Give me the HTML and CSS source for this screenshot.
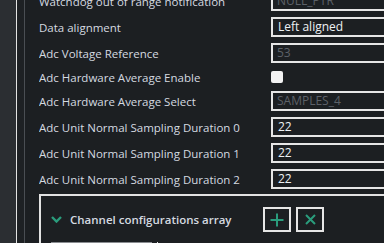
FILE: index.html
```html
<!doctype html>
<html>
    <head>
        <meta charset="utf-8">
        <title>Adc configuration</title>
        <link rel="stylesheet" href="styles.css">
    </head>

    <body>
        <div class="frame">
            <div class="sidebar"></div>
            <div class="gutter"></div>
            <div class="main">
                <div class="form">
                    <div class="row">
                        <div class="label">Watchdog out of range notification</div>
                        <div class="field disabled">NULL_PTR</div>
                    </div>
                    <div class="row">
                        <div class="label">Data alignment</div>
                        <div class="field">Left aligned</div>
                    </div>
                    <div class="row">
                        <div class="label">Adc Voltage Reference</div>
                        <div class="field disabled">53</div>
                    </div>
                    <div class="row short">
                        <div class="label">Adc Hardware Average Enable</div>
                        <div class="check"></div>
                    </div>
                    <div class="row">
                        <div class="label">Adc Hardware Average Select</div>
                        <div class="field disabled">SAMPLES_4</div>
                    </div>
                    <div class="row">
                        <div class="label">Adc Unit Normal Sampling Duration 0</div>
                        <div class="field">22</div>
                    </div>
                    <div class="row">
                        <div class="label">Adc Unit Normal Sampling Duration 1</div>
                        <div class="field">22</div>
                    </div>
                    <div class="row">
                        <div class="label">Adc Unit Normal Sampling Duration 2</div>
                        <div class="field">22</div>
                    </div>
                </div>

                <div class="group">
                    <div class="grouphead">
                        <svg class="chevron" width="11" height="7" viewBox="0 0 11 7">
                            <path d="M1 1 L5.5 5.5 L10 1" fill="none" stroke="#2a9c7c" stroke-width="2.4"/>
                        </svg>
                        <span class="grouptitle">Channel configurations array</span>
                        <div class="btn">
                            <svg width="14" height="14" viewBox="0 0 14 14">
                                <path d="M7 0.5 V13.5 M0.5 7 H13.5" stroke="#2a9c7c" stroke-width="2"/>
                            </svg>
                        </div>
                        <div class="btn">
                            <svg width="11" height="11" viewBox="0 0 11 11">
                                <path d="M1 1 L10 10 M10 1 L1 10" stroke="#2a9c7c" stroke-width="2"/>
                            </svg>
                        </div>
                    </div>
                    <div class="groupbody">
                        <div class="tab"></div>
                        <div class="tabedge"></div>
                    </div>
                </div>
            </div>
        </div>
    </body>

</html>
```

FILE: styles.css
```css
body{
    margin: 0px;
    background-color: #1c1f22;
    overflow: hidden;
    font-family: 'Open Sans', 'Noto Sans', sans-serif;
    font-size: 11.5px;
    color: #d5dae0;
}

.frame{
    display: flex;
    height: 243px;
    overflow: hidden;
}

.sidebar{
    width: 16px;
    flex: none;
    background-color: #2b2e32;
    border-right: 1px solid #e4e4e4;
}

.gutter{
    width: 7px;
    flex: none;
    background-color: #1e2124;
    border-right: 1px solid #4a4e53;
}

.main{
    flex: none;
    width: 600px;
    padding-left: 14px;
}

.form{
    margin-top: -12px;
}

.row{
    display: flex;
    align-items: center;
    height: 26px;
}

.row.short{
    height: 22px;
}

.label{
    width: 232px;
    flex: none;
    white-space: nowrap;
    overflow: hidden;
}

.field{
    box-sizing: border-box;
    width: 200px;
    height: 20px;
    border: 2px solid #e6e6e6;
    padding-left: 5px;
    line-height: 16px;
    font-size: 12px;
    color: #eef1f4;
}

.field.disabled{
    color: #5c6168;
    padding-left: 4px;
}

.check{
    width: 12px;
    height: 12px;
    border-radius: 2px;
    background-color: #f2f2f2;
}

.group{
    margin-top: 2px;
    border: 2px solid #e2e2e2;
    border-right: none;
    border-bottom: none;
    padding-left: 10px;
}

.grouphead{
    display: flex;
    align-items: center;
    height: 45px;
    padding-top: 1px;
}

.chevron{
    margin-right: 8px;
}

.grouptitle{
    font-weight: 600;
    width: 193px;
    flex: none;
    white-space: nowrap;
}

.btn{
    box-sizing: border-box;
    width: 28px;
    height: 25px;
    border: 2px solid #e6e6e6;
    display: flex;
    align-items: center;
    justify-content: center;
    margin-right: 5px;
}

.groupbody{
    display: flex;
    align-items: flex-start;
}

.tab{
    width: 101px;
    height: 2px;
    background-color: #8a8d91;
}

.tabedge{
    width: 1px;
    height: 2px;
    margin-left: 5px;
    background-color: #e6e6e6;
}
```
